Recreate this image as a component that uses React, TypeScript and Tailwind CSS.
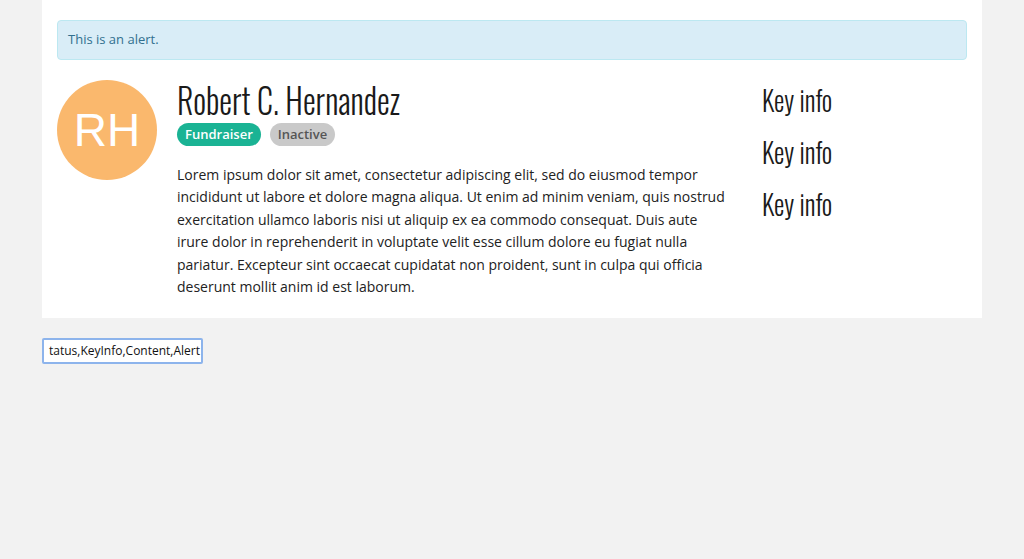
const heading = "font-['Oswald','Liberation_Sans_Narrow','DejaVu_Sans_Condensed',sans-serif] font-light";

const KeyInfo = () => (
    <div className={`${heading} text-[28px] leading-[52px] text-[#1a1a1a] origin-left scale-x-[0.93]`}>Key info</div>
);

export default function App() {
    return (
        <div className="min-h-[559px] bg-[#f2f2f2] font-['Open_Sans',sans-serif] text-[#333]">
            <div className="ml-[42px] w-[940px] bg-white px-[15px] pt-[20px] pb-[20px]">
                <div className="h-[40px] rounded-[4px] border border-[#bce8f1] bg-[#d9edf7] px-[10px] flex items-center text-[13px] text-[#31708f]">
                    This is an alert.
                </div>
                <div className="mt-[20px] flex">
                    <div className="w-[100px] h-[100px] shrink-0 rounded-full bg-[#fab86d] flex items-center justify-center text-white text-[46px] font-['Liberation_Sans',sans-serif]">
                        RH
                    </div>
                    <div className="ml-[20px] w-[555px]">
                        <h1 className={`${heading} text-[36px] leading-[38px] text-[#1a1a1a] origin-left scale-x-[0.89]`}>Robert C. Hernandez</h1>
                        <div className="mt-[5px] flex gap-[9px]">
                            <span className="h-[23px] px-[8px] rounded-full bg-[#1ab394] text-white text-[13px] font-semibold flex items-center">Fundraiser</span>
                            <span className="h-[23px] px-[8px] rounded-full bg-[#c9c9c9] text-[#555] text-[13px] font-semibold flex items-center">Inactive</span>
                        </div>
                        <p className="mt-[18px] text-[14px] leading-[22.4px] text-[#222]">
                            Lorem ipsum dolor sit amet, consectetur adipiscing elit, sed do eiusmod tempor incididunt ut labore et dolore magna aliqua. Ut enim ad minim veniam, quis nostrud exercitation ullamco laboris nisi ut aliquip ex ea commodo consequat. Duis aute irure dolor in reprehenderit in voluptate velit esse cillum dolore eu fugiat nulla pariatur. Excepteur sint occaecat cupidatat non proident, sunt in culpa qui officia deserunt mollit anim id est laborum.
                        </p>
                    </div>
                    <div className="ml-[30px] -mt-[6px]">
                        <KeyInfo />
                        <KeyInfo />
                        <KeyInfo />
                    </div>
                </div>
            </div>
            <div className="ml-[42px] mt-[20px] w-[161px] h-[26px] bg-white border-2 border-[#8db4ec] rounded-[2px] flex items-center px-[5px] text-[12px] text-[#111] overflow-hidden whitespace-nowrap">
                tatus,KeyInfo,Content,Alert
            </div>
        </div>
    );
}
